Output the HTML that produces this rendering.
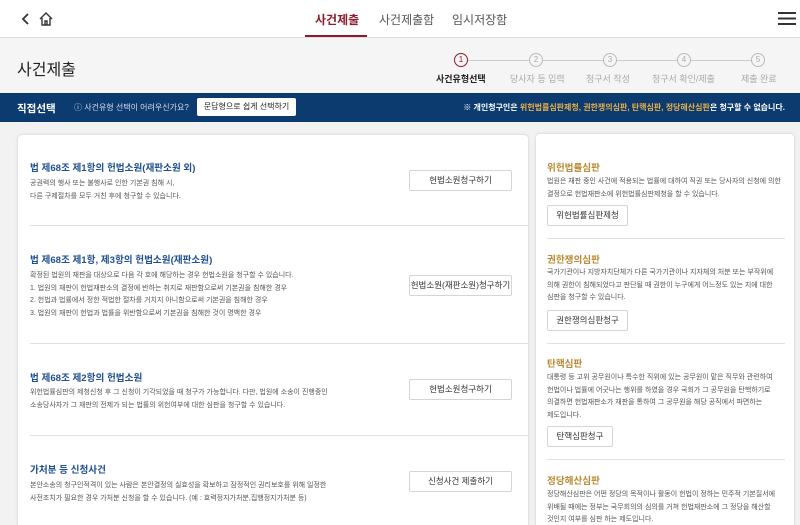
<!DOCTYPE html>
<html style="overflow:hidden;width:800px;height:525px"><head><meta charset="utf-8"><style>
*{margin:0;padding:0;box-sizing:border-box}
body{width:800px;height:525px;overflow:hidden;background:#f2f2f2;font-family:"Liberation Sans","Noto Sans CJK KR",sans-serif;position:relative;color:#333}
.a{position:absolute;white-space:nowrap}
.hdr{position:absolute;left:0;top:0;width:800px;height:38px;background:#fff;border-bottom:1px solid #ddd}
.tab{position:absolute;top:11px;font-size:12px;color:#555}
.tb{position:absolute;left:0;top:38px;width:800px;height:55px;background:#f5f5f5}
.blue{position:absolute;left:0;top:93px;width:800px;height:29px;background:#0c3b70;color:#fff}
.card{position:absolute;background:#fff;border:1px solid #e2e2e2;border-bottom:none;border-radius:5px 5px 0 0;box-shadow:0 0 3px rgba(0,0,0,.06)}
.t{position:absolute;font-size:9.6px;font-weight:bold;color:#1f4f8f;white-space:nowrap}
.g{color:#b88a33}
.d{position:absolute;font-size:7px;line-height:12.7px;color:#555;white-space:nowrap}
.btn{position:absolute;background:#fff;border:1px solid #d5d5d5;border-radius:2px;font-size:8.5px;color:#333;text-align:center;line-height:19px}
.hr{position:absolute;height:1px;background:#e0e0e0}
.c{position:absolute;top:53px;width:14px;height:14px;border:1px solid #bbb;border-radius:50%;font-size:8px;color:#aaa;text-align:center;line-height:12px;background:#f5f5f5}
.sl{position:absolute;top:72px;font-size:9px;color:#aaa;white-space:nowrap}
</style></head><body>
<div class="hdr">
<svg class="a" style="left:20px;top:12px" width="12" height="14"><path d="M8 2 L3 7 L8 12" stroke="#333" stroke-width="1.8" fill="none"/></svg>
<svg class="a" style="left:38px;top:11px" width="16" height="16"><path d="M2 8 L8 2 L14 8 M4 7 V14 H12 V7 M7 14 V10 H9 V14" stroke="#333" stroke-width="1.4" fill="none"/></svg>
<div class="tab" style="left:315px;color:#8a1c2c;font-weight:bold">사건제출</div>
<div class="a" style="left:305px;top:35px;width:62px;height:2px;background:#8a1c2c"></div>
<div class="tab" style="left:379px">사건제출함</div>
<div class="tab" style="left:452px">임시저장함</div>
<svg class="a" style="left:778px;top:11px" width="18" height="15"><path d="M0 2H18M0 7.5H18M0 13H18" stroke="#333" stroke-width="2"/></svg>
</div>
<div class="tb"></div>
<div class="a" style="left:17px;top:56px;font-size:16px;color:#222">사건제출</div>
<div class="a" style="left:468px;top:60px;width:290px;height:1px;background:#ccc"></div>
<div class="c" style="left:454px;border-color:#8a1c2c;color:#8a1c2c">1</div>
<div class="c" style="left:529px">2</div>
<div class="c" style="left:603px">3</div>
<div class="c" style="left:677px">4</div>
<div class="c" style="left:751px">5</div>
<div class="sl" style="left:436px;color:#222;font-weight:bold">사건유형선택</div>
<div class="sl" style="left:510px">당사자 등 입력</div>
<div class="sl" style="left:586px">청구서 작성</div>
<div class="sl" style="left:652px">청구서 확인/제출</div>
<div class="sl" style="left:741px">제출 완료</div>
<div class="blue">
<div class="a" style="left:17px;top:8px;font-size:10.5px;font-weight:bold">직접선택</div>
<div class="a" style="left:74px;top:9px;font-size:8px;color:#dde">ⓘ 사건유형 선택이 어려우신가요?</div>
<div class="a" style="left:197px;top:5px;width:99px;height:18px;background:#fff;border-radius:2px;color:#222;font-size:8px;text-align:center;line-height:18px">문답형으로 쉽게 선택하기</div>
<div class="a" style="right:15px;top:9px;font-size:8px;font-weight:bold">※ 개인청구인은 <span style="color:#e8b04a">위헌법률심판제청, 권한쟁의심판, 탄핵심판, 정당해산심판</span>은 청구할 수 없습니다.</div>
</div>
<div class="card" style="left:17px;top:134px;width:512px;height:391px">
<div class="t" style="left:12px;top:25px">법 제68조 제1항의 헌법소원(재판소원 외)</div>
<div class="d" style="left:12px;top:43px">공권력의 행사 또는 불행사로 인한 기본권 침해 시,<br>다른 구제절차를 모두 거친 후에 청구할 수 있습니다.</div>
<div class="btn" style="left:391px;top:35px;width:103px;height:21px">헌법소원청구하기</div>
<div class="hr" style="left:12px;top:90px;width:498px"></div>
<div class="t" style="left:12px;top:117px">법 제68조 제1항, 제3항의 헌법소원(재판소원)</div>
<div class="d" style="left:12px;top:135px">확정된 법원의 재판을 대상으로 다음 각 호에 해당하는 경우 헌법소원을 청구할 수 있습니다.<br>1. 법원의 재판이 헌법재판소의 결정에 반하는 취지로 재판함으로써 기본권을 침해한 경우<br>2. 헌법과 법률에서 정한 적법한 절차를 거치지 아니함으로써 기본권을 침해한 경우<br>3. 법원의 재판이 헌법과 법률을 위반함으로써 기본권을 침해한 것이 명백한 경우</div>
<div class="btn" style="left:391px;top:140px;width:103px;height:21px">헌법소원(재판소원)청구하기</div>
<div class="hr" style="left:12px;top:208px;width:498px"></div>
<div class="t" style="left:12px;top:235px">법 제68조 제2항의 헌법소원</div>
<div class="d" style="left:12px;top:252px">위헌법률심판의 제청신청 후 그 신청이 기각되었을 때 청구가 가능합니다. 다만, 법원에 소송이 진행중인<br>소송당사자가 그 재판의 전제가 되는 법률의 위헌여부에 대한 심판을 청구할 수 있습니다.</div>
<div class="btn" style="left:391px;top:244px;width:103px;height:21px">헌법소원청구하기</div>
<div class="hr" style="left:12px;top:300px;width:498px"></div>
<div class="t" style="left:12px;top:327px">가처분 등 신청사건</div>
<div class="d" style="left:12px;top:345px">본안소송의 청구인적격이 있는 사람은 본안결정의 실효성을 확보하고 잠정적인 권리보호를 위해 일정한<br>사전조치가 필요한 경우 가처분 신청을 할 수 있습니다. (예 : 효력정지가처분,집행정지가처분 등)</div>
<div class="btn" style="left:391px;top:336px;width:103px;height:21px">신청사건 제출하기</div>
</div>
<div class="card" style="left:535px;top:133px;width:260px;height:392px">
<div class="t g" style="left:11px;top:26px">위헌법률심판</div>
<div class="d" style="left:11px;top:42px">법원은 재판 중인 사건에 적용되는 법률에 대하여 직권 또는 당사자의 신청에 의한<br>결정으로 헌법재판소에 위헌법률심판제청을 할 수 있습니다.</div>
<div class="btn" style="left:11px;top:71px;width:81px;height:21px">위헌법률심판제청</div>
<div class="hr" style="left:11px;top:104px;width:238px"></div>
<div class="t g" style="left:11px;top:118px">권한쟁의심판</div>
<div class="d" style="left:11px;top:133px">국가기관이나 지방자치단체가 다른 국가기관이나 지자체의 처분 또는 부작위에<br>의해 권한이 침해되었다고 판단될 때 권한이 누구에게 어느정도 있는 지에 대한<br>심판을 청구할 수 있습니다.</div>
<div class="btn" style="left:11px;top:176px;width:81px;height:21px">권한쟁의심판청구</div>
<div class="hr" style="left:11px;top:209px;width:238px"></div>
<div class="t g" style="left:11px;top:222px">탄핵심판</div>
<div class="d" style="left:11px;top:238px">대통령 등 고위 공무원이나 특수한 직위에 있는 공무원이 맡은 직무와 관련하여<br>헌법이나 법률에 어긋나는 행위를 하였을 경우 국회가 그 공무원을 탄핵하기로<br>의결하면 헌법재판소가 재판을 통하여 그 공무원을 해당 공직에서 파면하는<br>제도입니다.</div>
<div class="btn" style="left:11px;top:292px;width:66px;height:21px">탄핵심판청구</div>
<div class="hr" style="left:11px;top:325px;width:238px"></div>
<div class="t g" style="left:11px;top:339px">정당해산심판</div>
<div class="d" style="left:11px;top:355px">정당해산심판은 어떤 정당의 목적이나 활동이 헌법이 정하는 민주적 기본질서에<br>위배될 때에는 정부는 국무회의의 심의를 거쳐 헌법재판소에 그 정당을 해산할<br>것인지 여부를 심판 하는 제도입니다.</div>
</div>
</body></html>
